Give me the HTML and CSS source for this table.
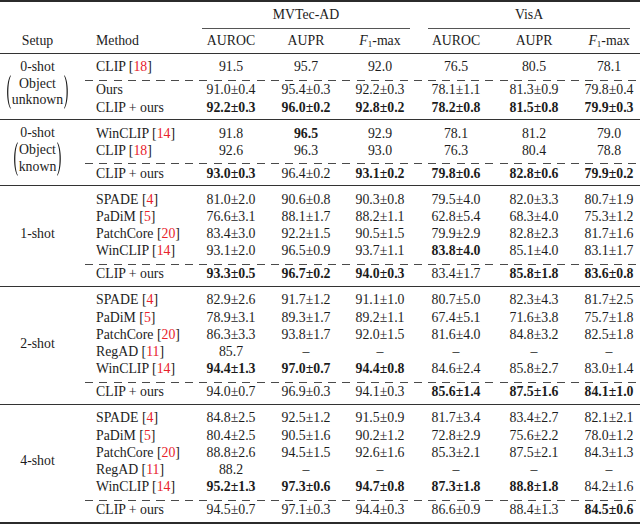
FILE: index.html
```html
<!DOCTYPE html>
<html lang="en">
<head>
<meta charset="utf-8">
<title>Results table</title>
<link rel="stylesheet" href="styles.css">
</head>
<body>
<table class="results">
  <colgroup>
    <col class="w-setup"><col class="w-method"><col class="w-a"><col class="w-b"><col class="w-c"><col class="w-d"><col class="w-e"><col class="w-f">
  </colgroup>
  <thead>
    <tr class="h1">
      <th></th><th></th>
      <th colspan="3"><div class="group-label mvtec">MVTec-AD</div></th>
      <th colspan="3"><div class="group-label visa">VisA</div></th>
    </tr>
    <tr class="h2">
      <th>Setup</th><th class="method">Method</th>
      <th>AUROC</th><th>AUPR</th><th><i>F</i><sub>1</sub>-max</th>
      <th>AUROC</th><th>AUPR</th><th><i>F</i><sub>1</sub>-max</th>
    </tr>
  </thead>

  <tbody>
    <tr class="first pre-dash">
      <td class="setup top" rowspan="4">
        <div>0-shot</div>
        <div class="cond">
          <svg class="paren" width="6" height="34" viewBox="0 0 6 34"><path d="M5.6 0.3 C1.0 6 1.0 28 5.6 33.7 L5.95 33.3 C2.5 27 2.5 7 5.95 0.7 Z"/></svg>
          <div class="cond-text">Object<br>unknown</div>
          <svg class="paren" width="6" height="34" viewBox="0 0 6 34"><path d="M0.4 0.3 C5.0 6 5.0 28 0.4 33.7 L0.05 33.3 C3.5 27 3.5 7 0.05 0.7 Z"/></svg>
        </div>
      </td>
      <td class="method">CLIP [<span class="ref">18</span>]</td>
      <td>91.5</td><td>95.7</td><td>92.0</td><td>76.5</td><td>80.5</td><td>78.1</td>
    </tr>
    <tr class="dash"><td colspan="7"><div class="dash-line"></div></td></tr>
    <tr class="post-dash">
      <td class="method">Ours</td>
      <td>91.0&plusmn;0.4</td><td>95.4&plusmn;0.3</td><td>92.2&plusmn;0.3</td><td>78.1&plusmn;1.1</td><td>81.3&plusmn;0.9</td><td>79.8&plusmn;0.4</td>
    </tr>
    <tr class="last">
      <td class="method">CLIP + ours</td>
      <td class="best">92.2&plusmn;0.3</td><td class="best">96.0&plusmn;0.2</td><td class="best">92.8&plusmn;0.2</td><td class="best">78.2&plusmn;0.8</td><td class="best">81.5&plusmn;0.8</td><td class="best">79.9&plusmn;0.3</td>
    </tr>
  </tbody>

  <tbody>
    <tr class="first">
      <td class="setup top" rowspan="4">
        <div>0-shot</div>
        <div class="cond">
          <svg class="paren" width="6" height="34" viewBox="0 0 6 34"><path d="M5.6 0.3 C1.0 6 1.0 28 5.6 33.7 L5.95 33.3 C2.5 27 2.5 7 5.95 0.7 Z"/></svg>
          <div class="cond-text">Object<br>known</div>
          <svg class="paren" width="6" height="34" viewBox="0 0 6 34"><path d="M0.4 0.3 C5.0 6 5.0 28 0.4 33.7 L0.05 33.3 C3.5 27 3.5 7 0.05 0.7 Z"/></svg>
        </div>
      </td>
      <td class="method">WinCLIP [<span class="ref">14</span>]</td>
      <td>91.8</td><td class="best">96.5</td><td>92.9</td><td>78.1</td><td>81.2</td><td>79.0</td>
    </tr>
    <tr class="pre-dash">
      <td class="method">CLIP [<span class="ref">18</span>]</td>
      <td>92.6</td><td>96.3</td><td>93.0</td><td>76.3</td><td>80.4</td><td>78.8</td>
    </tr>
    <tr class="dash"><td colspan="7"><div class="dash-line"></div></td></tr>
    <tr class="post-dash last">
      <td class="method">CLIP + ours</td>
      <td class="best">93.0&plusmn;0.3</td><td>96.4&plusmn;0.2</td><td class="best">93.1&plusmn;0.2</td><td class="best">79.8&plusmn;0.6</td><td class="best">82.8&plusmn;0.6</td><td class="best">79.9&plusmn;0.2</td>
    </tr>
  </tbody>

  <tbody>
    <tr class="first">
      <td class="setup mid" rowspan="6">1-shot</td>
      <td class="method">SPADE [<span class="ref">4</span>]</td>
      <td>81.0&plusmn;2.0</td><td>90.6&plusmn;0.8</td><td>90.3&plusmn;0.8</td><td>79.5&plusmn;4.0</td><td>82.0&plusmn;3.3</td><td>80.7&plusmn;1.9</td>
    </tr>
    <tr>
      <td class="method">PaDiM [<span class="ref">5</span>]</td>
      <td>76.6&plusmn;3.1</td><td>88.1&plusmn;1.7</td><td>88.2&plusmn;1.1</td><td>62.8&plusmn;5.4</td><td>68.3&plusmn;4.0</td><td>75.3&plusmn;1.2</td>
    </tr>
    <tr>
      <td class="method">PatchCore [<span class="ref">20</span>]</td>
      <td>83.4&plusmn;3.0</td><td>92.2&plusmn;1.5</td><td>90.5&plusmn;1.5</td><td>79.9&plusmn;2.9</td><td>82.8&plusmn;2.3</td><td>81.7&plusmn;1.6</td>
    </tr>
    <tr class="pre-dash">
      <td class="method">WinCLIP [<span class="ref">14</span>]</td>
      <td>93.1&plusmn;2.0</td><td>96.5&plusmn;0.9</td><td>93.7&plusmn;1.1</td><td class="best">83.8&plusmn;4.0</td><td>85.1&plusmn;4.0</td><td>83.1&plusmn;1.7</td>
    </tr>
    <tr class="dash"><td colspan="7"><div class="dash-line"></div></td></tr>
    <tr class="post-dash last">
      <td class="method">CLIP + ours</td>
      <td class="best">93.3&plusmn;0.5</td><td class="best">96.7&plusmn;0.2</td><td class="best">94.0&plusmn;0.3</td><td>83.4&plusmn;1.7</td><td class="best">85.8&plusmn;1.8</td><td class="best">83.6&plusmn;0.8</td>
    </tr>
  </tbody>

  <tbody>
    <tr class="first">
      <td class="setup mid" rowspan="7">2-shot</td>
      <td class="method">SPADE [<span class="ref">4</span>]</td>
      <td>82.9&plusmn;2.6</td><td>91.7&plusmn;1.2</td><td>91.1&plusmn;1.0</td><td>80.7&plusmn;5.0</td><td>82.3&plusmn;4.3</td><td>81.7&plusmn;2.5</td>
    </tr>
    <tr>
      <td class="method">PaDiM [<span class="ref">5</span>]</td>
      <td>78.9&plusmn;3.1</td><td>89.3&plusmn;1.7</td><td>89.2&plusmn;1.1</td><td>67.4&plusmn;5.1</td><td>71.6&plusmn;3.8</td><td>75.7&plusmn;1.8</td>
    </tr>
    <tr>
      <td class="method">PatchCore [<span class="ref">20</span>]</td>
      <td>86.3&plusmn;3.3</td><td>93.8&plusmn;1.7</td><td>92.0&plusmn;1.5</td><td>81.6&plusmn;4.0</td><td>84.8&plusmn;3.2</td><td>82.5&plusmn;1.8</td>
    </tr>
    <tr>
      <td class="method">RegAD [<span class="ref">11</span>]</td>
      <td>85.7</td><td>&ndash;</td><td>&ndash;</td><td>&ndash;</td><td>&ndash;</td><td>&ndash;</td>
    </tr>
    <tr class="pre-dash">
      <td class="method">WinCLIP [<span class="ref">14</span>]</td>
      <td class="best">94.4&plusmn;1.3</td><td class="best">97.0&plusmn;0.7</td><td class="best">94.4&plusmn;0.8</td><td>84.6&plusmn;2.4</td><td>85.8&plusmn;2.7</td><td>83.0&plusmn;1.4</td>
    </tr>
    <tr class="dash"><td colspan="7"><div class="dash-line"></div></td></tr>
    <tr class="post-dash last">
      <td class="method">CLIP + ours</td>
      <td>94.0&plusmn;0.7</td><td>96.9&plusmn;0.3</td><td>94.1&plusmn;0.3</td><td class="best">85.6&plusmn;1.4</td><td class="best">87.5&plusmn;1.6</td><td class="best">84.1&plusmn;1.0</td>
    </tr>
  </tbody>

  <tbody>
    <tr class="first">
      <td class="setup mid" rowspan="7">4-shot</td>
      <td class="method">SPADE [<span class="ref">4</span>]</td>
      <td>84.8&plusmn;2.5</td><td>92.5&plusmn;1.2</td><td>91.5&plusmn;0.9</td><td>81.7&plusmn;3.4</td><td>83.4&plusmn;2.7</td><td>82.1&plusmn;2.1</td>
    </tr>
    <tr>
      <td class="method">PaDiM [<span class="ref">5</span>]</td>
      <td>80.4&plusmn;2.5</td><td>90.5&plusmn;1.6</td><td>90.2&plusmn;1.2</td><td>72.8&plusmn;2.9</td><td>75.6&plusmn;2.2</td><td>78.0&plusmn;1.2</td>
    </tr>
    <tr>
      <td class="method">PatchCore [<span class="ref">20</span>]</td>
      <td>88.8&plusmn;2.6</td><td>94.5&plusmn;1.5</td><td>92.6&plusmn;1.6</td><td>85.3&plusmn;2.1</td><td>87.5&plusmn;2.1</td><td>84.3&plusmn;1.3</td>
    </tr>
    <tr>
      <td class="method">RegAD [<span class="ref">11</span>]</td>
      <td>88.2</td><td>&ndash;</td><td>&ndash;</td><td>&ndash;</td><td>&ndash;</td><td>&ndash;</td>
    </tr>
    <tr class="pre-dash">
      <td class="method">WinCLIP [<span class="ref">14</span>]</td>
      <td class="best">95.2&plusmn;1.3</td><td class="best">97.3&plusmn;0.6</td><td class="best">94.7&plusmn;0.8</td><td class="best">87.3&plusmn;1.8</td><td class="best">88.8&plusmn;1.8</td><td>84.2&plusmn;1.6</td>
    </tr>
    <tr class="dash"><td colspan="7"><div class="dash-line"></div></td></tr>
    <tr class="post-dash last">
      <td class="method">CLIP + ours</td>
      <td>94.5&plusmn;0.7</td><td>97.1&plusmn;0.3</td><td>94.4&plusmn;0.3</td><td>86.6&plusmn;0.9</td><td>88.4&plusmn;1.3</td><td class="best">84.5&plusmn;0.6</td>
    </tr>
  </tbody>
</table>
</body>
</html>
```

FILE: styles.css
```css
html, body {
  margin: 0;
  padding: 0;
  background: #ffffff;
}

body {
  color: #1c1c1c;
  font-family: "Liberation Serif", "Times New Roman", serif;
  font-size: 13.8px;
}

.results {
  width: 640px;
  table-layout: fixed;
  border-collapse: separate;
  border-spacing: 0;
  border-top: 2px solid #2b2b2b;
  border-bottom: 2px solid #2b2b2b;
}

.w-setup { width: 75px; }
.w-method { width: 119px; }
.w-a { width: 74px; }
.w-b { width: 76px; }
.w-c { width: 72px; }
.w-d { width: 80px; }
.w-e { width: 76px; }
.w-f { width: 68px; }

.results th,
.results td {
  padding: 0;
  line-height: 17.2px;
  font-weight: normal;
  text-align: center;
  white-space: nowrap;
  vertical-align: middle;
}

.results .method {
  text-align: left;
  padding-left: 21px;
}

.results tr:not(.dash) > td:last-child,
.results .h2 > th:last-child {
  padding-left: 6px;
}

/* header */
.group-label {
  padding: 4.4px 0;
  border-bottom: 1px solid #555;
}
.group-label.mvtec { margin: 0 6px 0 8px; }
.group-label.visa { margin: 0 10px 0 12px; }

.results .h2 > th {
  padding-top: 3.4px;
  padding-bottom: 3.4px;
}

sub {
  font-size: 9px;
  line-height: 0;
  vertical-align: -2px;
}

/* body rules & spacing */
.results tbody tr.first > td {
  border-top: 1px solid #333;
  padding-top: 4.5px;
}
.results tbody tr.pre-dash > td {
  padding-bottom: 4.3px;
}
.results tbody tr.post-dash > td {
  padding-top: 0.5px;
}
.results tbody tr.last > td {
  padding-bottom: 3.3px;
}

.results tr.dash > td {
  height: 1px;
  line-height: 0;
  padding: 0;
}
.dash-line {
  height: 1px;
  margin-left: 10px;
  background: repeating-linear-gradient(90deg, #4a4a4a 0 8px, transparent 8px 14.3px);
}

/* setup column */
.results tbody tr.first > td.setup {
  line-height: 16.6px;
}
.results tbody tr.first > td.setup.top {
  vertical-align: top;
  padding-top: 4.8px;
  padding-bottom: 0;
}
.results tbody tr.first > td.setup.mid {
  padding-top: 0;
  padding-bottom: 3px;
}

.cond {
  display: flex;
  justify-content: center;
  align-items: center;
  gap: 1px;
}
.cond-text {
  text-align: center;
}
.paren {
  display: block;
  fill: #1c1c1c;
}

.ref {
  color: #e8222b;
}

.best {
  font-weight: bold !important;
}
```
